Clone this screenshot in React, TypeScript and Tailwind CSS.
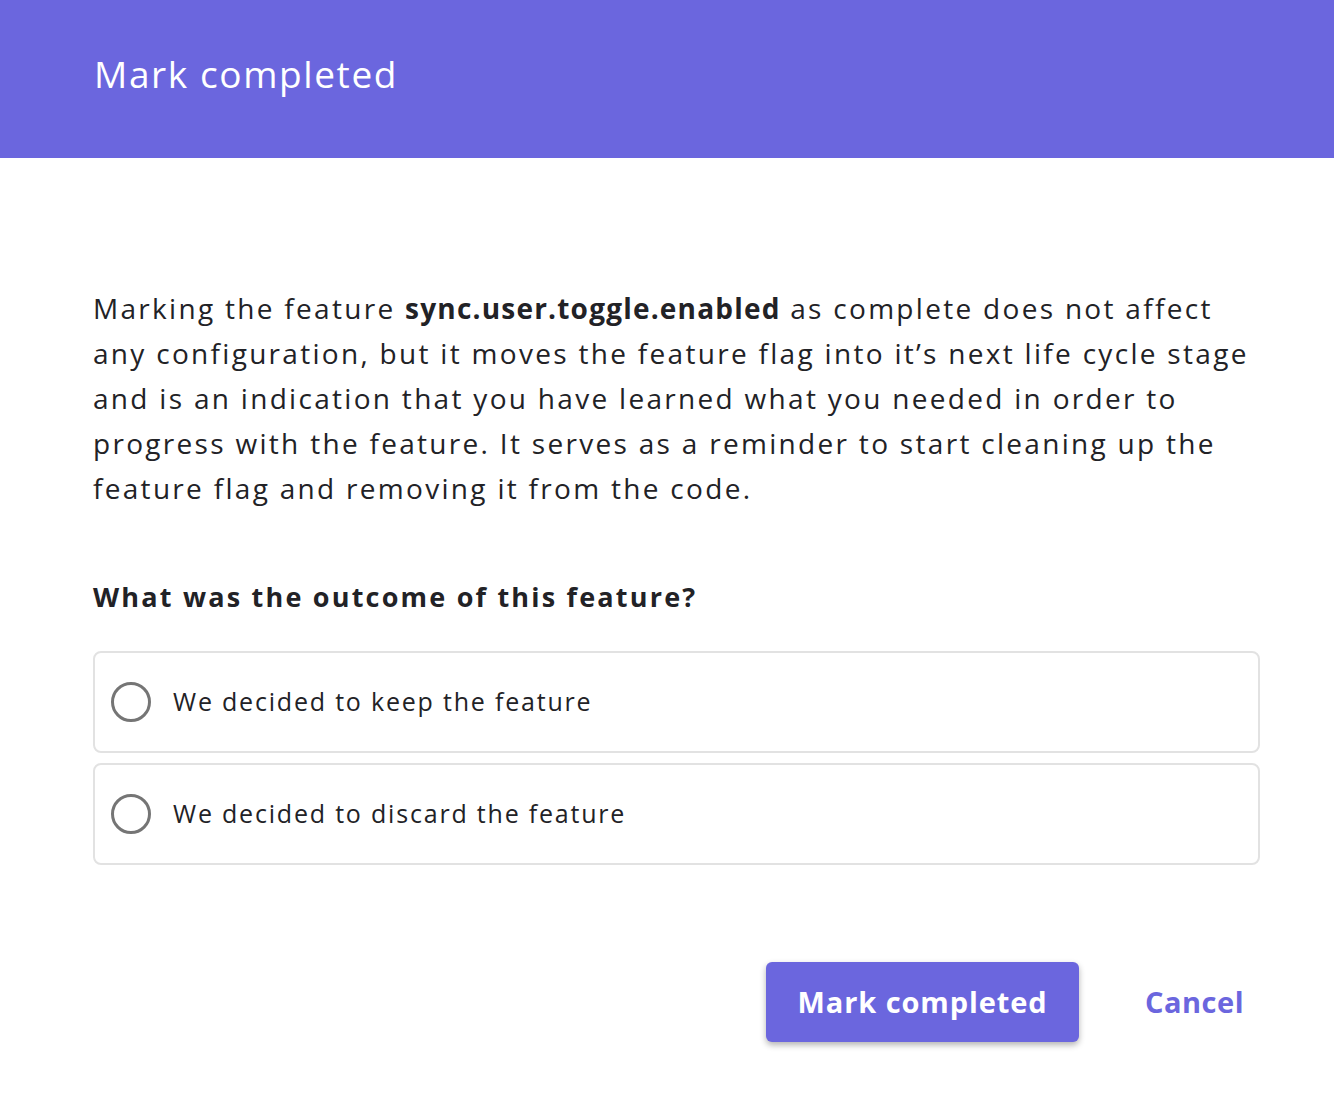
import React from 'react';

const options = ['We decided to keep the feature', 'We decided to discard the feature'];

export default function App() {
  return (
    <div className="min-h-screen w-full bg-white text-[#222226]" style={{ fontFamily: '"Open Sans", Lato, sans-serif' }}>
      {/* Header */}
      <header className="h-[158px] bg-[#6b66de] px-[94px] flex items-center pb-[10px]">
        <h1 className="text-[37px] font-normal text-white tracking-[1.6px]">Mark completed</h1>
      </header>

      <div className="px-[93px] pt-[128px]">
        <p className="text-[28px] leading-[45px] tracking-[2.3px] whitespace-nowrap">
          <span className="block">
            Marking the feature <strong className="font-bold tracking-[1.2px]">sync.user.toggle.enabled</strong> as complete does not affect
          </span>
          <span className="block">any configuration, but it moves the feature flag into it’s next life cycle stage</span>
          <span className="block">and is an indication that you have learned what you needed in order to</span>
          <span className="block">progress with the feature. It serves as a reminder to start cleaning up the</span>
          <span className="block">feature flag and removing it from the code.</span>
        </p>

        <h2 className="mt-[66px] text-[27px] font-bold leading-[40px] tracking-[2.2px]">What was the outcome of this feature?</h2>

        <div className="mt-[34px] flex flex-col gap-[10px] w-[1167px]">
          {options.map((label) => (
            <label key={label} className="h-[102px] rounded-[8px] border-2 border-[#e2e2e2] flex items-center px-[16px] gap-[22px] cursor-pointer">
              <span className="w-[40px] h-[40px] rounded-full border-[3px] border-[#757575] shrink-0" />
              <span className="text-[25px] tracking-[1.8px]">{label}</span>
            </label>
          ))}
        </div>

        <div className="mt-[97px] flex justify-end items-center w-[1167px]">
          <button className="h-[80px] w-[313px] rounded-[6px] bg-[#6b66de] text-white text-[29px] font-bold tracking-[0.9px] shadow-[0_3px_6px_rgba(0,0,0,0.3)]">
            Mark completed
          </button>
          <button className="ml-[66px] mr-[16px] text-[29px] font-bold text-[#6b66de] tracking-[0.5px]">Cancel</button>
        </div>
      </div>
    </div>
  );
}
